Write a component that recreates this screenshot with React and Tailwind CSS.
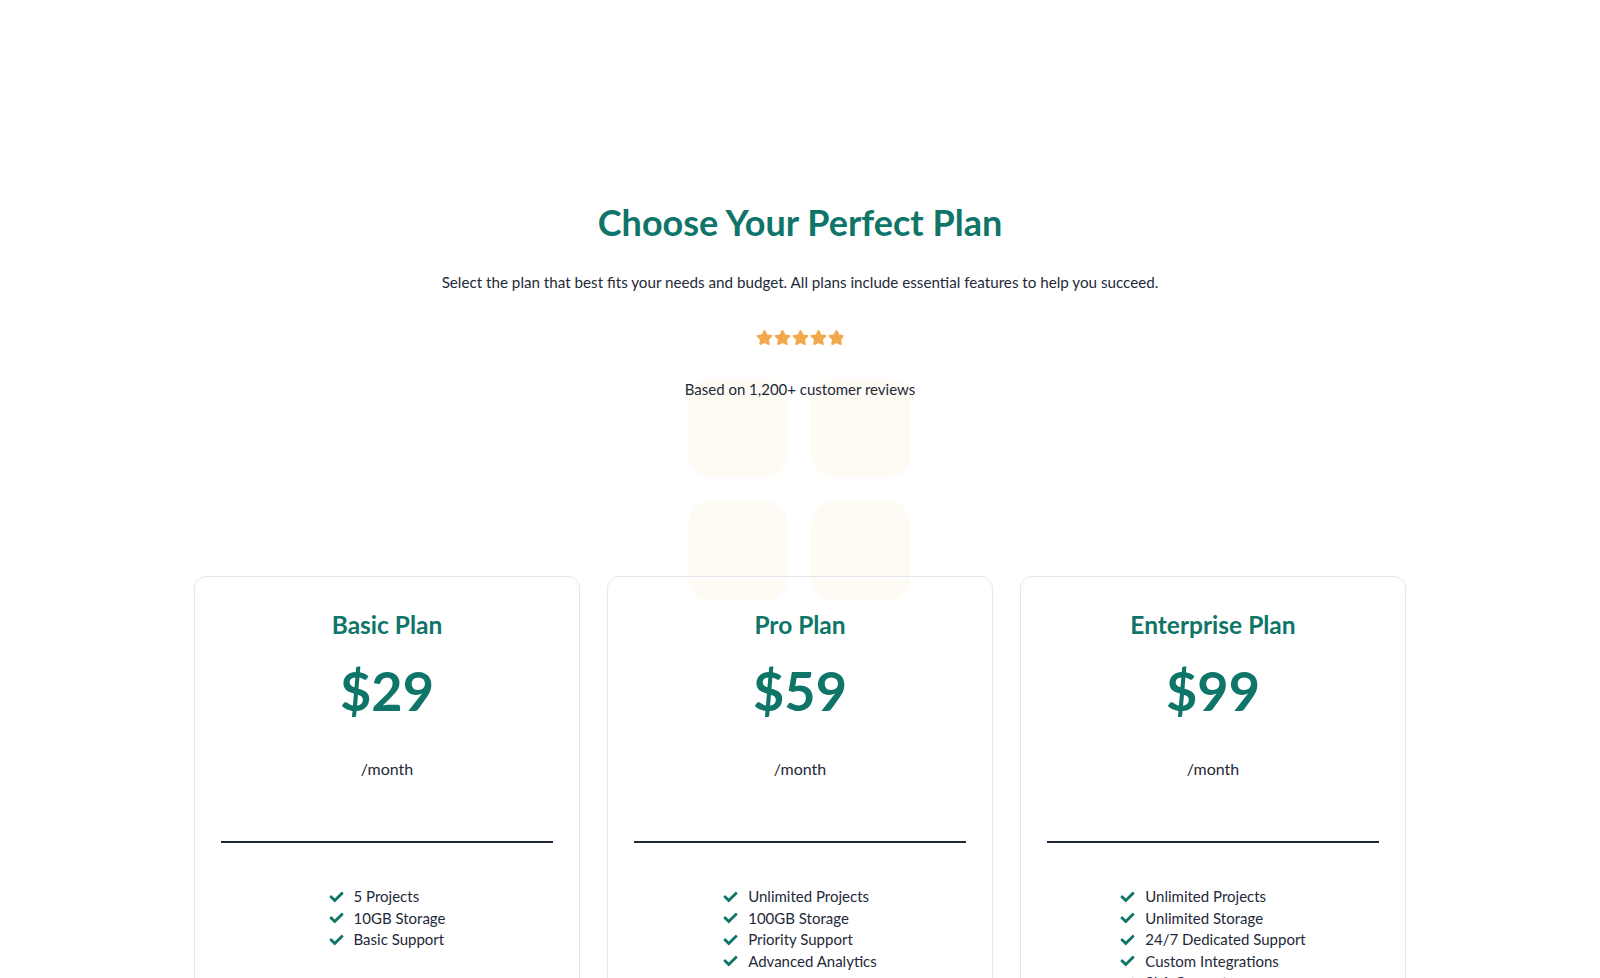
import { FaStar, FaCheck } from "react-icons/fa";

const plans = [
  { name: "Basic Plan", price: "$29", features: ["5 Projects", "10GB Storage", "Basic Support"] },
  {
    name: "Pro Plan",
    price: "$59",
    features: ["Unlimited Projects", "100GB Storage", "Priority Support", "Advanced Analytics"],
  },
  {
    name: "Enterprise Plan",
    price: "$99",
    features: [
      "Unlimited Projects",
      "Unlimited Storage",
      "24/7 Dedicated Support",
      "Custom Integrations",
      "SLA Guarantee",
    ],
  },
];

function Stars() {
  return (
    <div className="flex items-center justify-center gap-[1px]">
      {[0, 1, 2, 3].map((i) => (
        <FaStar key={i} className="h-[17px] w-[17px] text-[#f2a94c]" />
      ))}
      <span className="relative inline-block h-[17px] w-[17px]">
        <FaStar className="absolute inset-0 h-[17px] w-[17px] text-[#e5e7eb]" />
        <span className="absolute inset-y-0 left-0 w-[15px] overflow-hidden">
          <FaStar className="h-[17px] w-[17px] text-[#f2a94c]" />
        </span>
      </span>
    </div>
  );
}

function PlanCard({ plan }) {
  return (
    <div className="rounded-xl border border-[#e2e8f0] px-[26px] pt-8 pb-10 text-center">
      <h3 className="text-[24.5px] leading-8 font-bold text-[#0e7568]">{plan.name}</h3>
      <p className="mt-[23px] text-[54px] leading-none font-bold text-[#0e7568]">{plan.price}</p>
      <p className="mt-[39px] text-base leading-6 text-gray-800">/month</p>
      <div className="mt-[60px] border-t-2 border-gray-800" />
      <div className="mt-[43px] flex justify-center">
        <ul className="text-left">
          {plan.features.map((f) => (
            <li key={f} className="flex items-center gap-[10px] text-[15px] leading-[21.5px] text-gray-800">
              <FaCheck className="h-[14px] w-[15px] text-[#0e7568]" />
              {f}
            </li>
          ))}
        </ul>
      </div>
    </div>
  );
}

export default function App() {
  return (
    <div className="min-h-screen bg-white font-['Lato',sans-serif]">
      <section className="relative pt-[202px]">
        <div className="pointer-events-none absolute top-[378px] left-[688px] grid grid-cols-2 gap-[23px]">
          <div className="h-[100px] w-[100px] rounded-3xl bg-[#fdfbf3]" />
          <div className="h-[100px] w-[100px] rounded-3xl bg-[#fdfbf3]" />
          <div className="h-[100px] w-[100px] rounded-3xl bg-[#fdfbf3]" />
          <div className="h-[100px] w-[100px] rounded-3xl bg-[#fdfbf3]" />
        </div>

        <div className="relative mx-auto text-center">
          <h1 className="text-4xl leading-10 font-bold text-[#0e7568]">Choose Your Perfect Plan</h1>
          <p className="mt-7 text-[15.2px] leading-6 text-gray-800">
            Select the plan that best fits your needs and budget. All plans include essential features to help you succeed.
          </p>
          <div className="mt-[35px]">
            <Stars />
          </div>
          <p className="mt-[31px] text-[15px] leading-6 text-gray-800">Based on 1,200+ customer reviews</p>
        </div>

        <div className="relative mx-auto mt-[175px] grid w-[1212px] grid-cols-3 gap-[27px]">
          {plans.map((p) => (
            <PlanCard key={p.name} plan={p} />
          ))}
        </div>
      </section>
    </div>
  );
}
